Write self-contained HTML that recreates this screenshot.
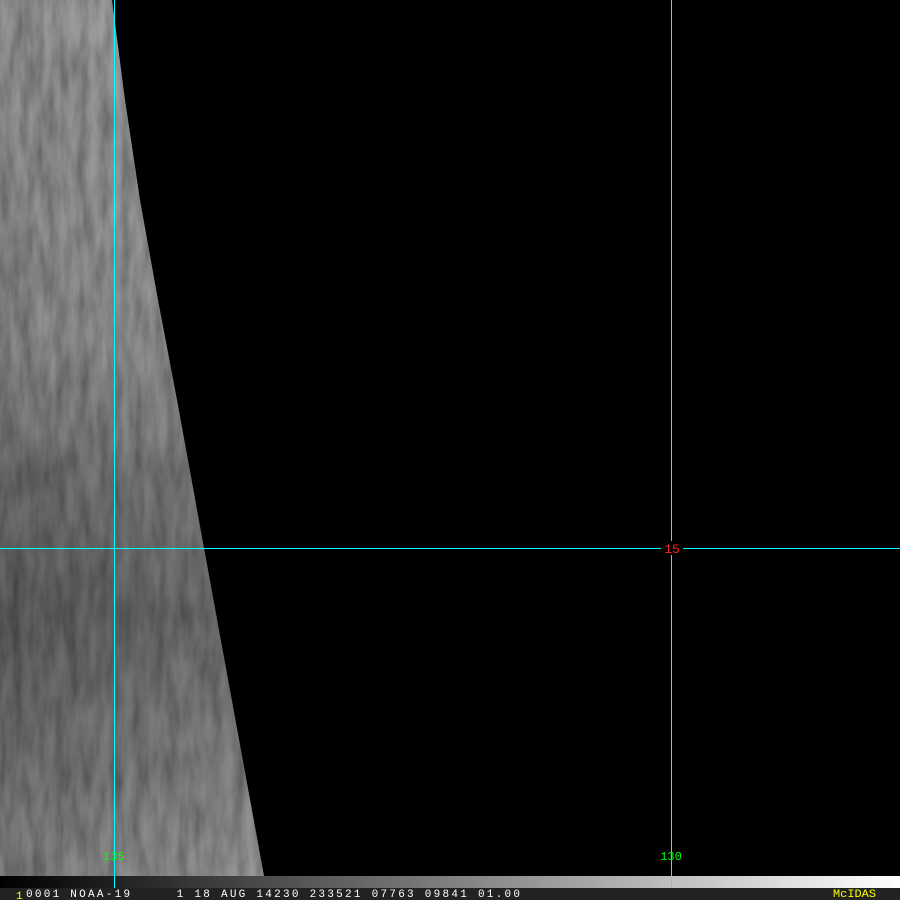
<!DOCTYPE html>
<html><head><meta charset="utf-8"><style>
html,body{margin:0;padding:0;background:#000;width:900px;height:900px;overflow:hidden}
svg{display:block}
text{font-family:"Liberation Mono",monospace}
</style></head><body>
<svg width="900" height="900" viewBox="0 0 900 900" xmlns="http://www.w3.org/2000/svg">
<defs>
<linearGradient id="base" x1="0" y1="0" x2="0" y2="1">
<stop offset="0" stop-color="#a2a2a2"/>
<stop offset="0.4" stop-color="#969696"/>
<stop offset="0.55" stop-color="#7a7a7a"/>
<stop offset="0.7" stop-color="#676767"/>
<stop offset="0.85" stop-color="#7c7c7c"/>
<stop offset="1" stop-color="#909090"/>
</linearGradient>
<linearGradient id="side" x1="0" y1="0" x2="1" y2="0">
<stop offset="0" stop-color="#000" stop-opacity="0.08"/>
<stop offset="1" stop-color="#fff" stop-opacity="0.08"/>
</linearGradient>
<filter id="tex" x="0" y="0" width="100%" height="100%">
<feTurbulence type="fractalNoise" baseFrequency="0.09 0.02" numOctaves="3" seed="4" result="n"/>
<feColorMatrix in="n" type="matrix" values="0 0 0 0 0  0 0 0 0 0  0 0 0 0 0  0 0 0 0.9 -0.2" result="a"/>
<feComposite in="a" in2="SourceGraphic" operator="in" result="d"/>
<feMerge><feMergeNode in="SourceGraphic"/><feMergeNode in="d"/></feMerge>
</filter>
<linearGradient id="bar" x1="0" y1="0" x2="1" y2="0">
<stop offset="0" stop-color="#000"/>
<stop offset="1" stop-color="#fff"/>
</linearGradient>
</defs>
<rect width="900" height="900" fill="#000"/>
<polygon points="0,0 112,0 125,100 140,200 158,300 177,400 204,548 264,876 0,876" fill="url(#base)" filter="url(#tex)"/>
<polygon points="0,0 112,0 125,100 140,200 158,300 177,400 204,548 264,876 0,876" fill="url(#side)"/>
<rect x="0" y="876" width="900" height="12" fill="url(#bar)"/>
<rect x="0" y="888" width="900" height="12" fill="#222"/>
<line x1="114.5" y1="0" x2="114.5" y2="888" stroke="#00ffff" stroke-width="1"/>
<line x1="671.5" y1="0" x2="671.5" y2="888" stroke="#00ffff" stroke-width="1"/>
<line x1="0" y1="548.5" x2="900" y2="548.5" stroke="#00ffff" stroke-width="1"/>
<rect x="661" y="541" width="22" height="14" fill="#000"/>
<text x="672" y="553" fill="#ff2020" font-size="13" text-anchor="middle">15</text>
<text x="114" y="860" fill="#00ff00" font-size="12" text-anchor="middle">135</text>
<text x="671" y="860" fill="#00ff00" font-size="12" text-anchor="middle">130</text>
<text x="16" y="899" fill="#ffff00" font-size="11">1</text>
<text x="26" y="897" fill="#ffffff" font-size="11" textLength="494" lengthAdjust="spacing" xml:space="preserve">0001 NOAA-19     1 18 AUG 14230 233521 07763 09841 01.00</text>
<text x="833" y="897" fill="#ffff00" font-size="11" textLength="43" lengthAdjust="spacingAndGlyphs">McIDAS</text>
</svg>
</body></html>
